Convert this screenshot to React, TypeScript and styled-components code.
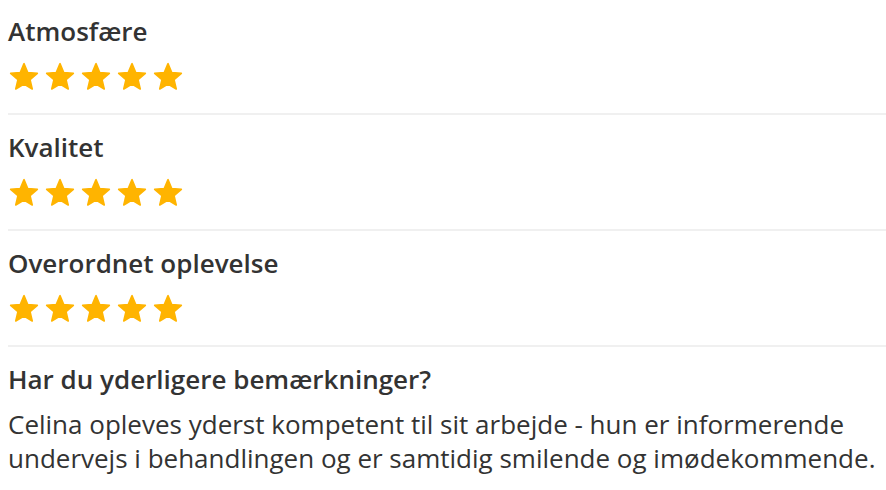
import React from 'react';
import styled, { createGlobalStyle } from 'styled-components';

const GlobalStyle = createGlobalStyle`
    body {
        margin: 0;
        background: #fff;
        font-family: 'Open Sans', 'Noto Sans', sans-serif;
        color: #333;
    }
`;

const Page = styled.div`
    padding: 0 0 0 8px;
`;

const Section = styled.div<{first?: boolean}>`
    padding: ${p => (p.first ? '13px' : '14px')} 0 20px 0;
    border-bottom: 2px solid #f0f0f0;
`;

const Title = styled.div`
    font-size: 26px;
    font-weight: 600;
    line-height: 36px;
`;

const Stars = styled.div`
    display: flex;
    gap: 4px;
    margin-top: 12px;
    height: 32px;
`;

const Remarks = styled.div`
    padding: 14px 0 0 0;
`;

const Question = styled.div`
    font-size: 26px;
    font-weight: 600;
    line-height: 36px;
`;

const Answer = styled.p`
    margin: 10px 0 0 0;
    font-size: 26px;
    line-height: 34px;
    color: #333;
`;

const Star = () => (
    <svg width="32" height="32" viewBox="0 0 24 24">
        <path
            d="M12 17.27L18.18 21l-1.64-7.03L22 9.24l-7.19-.61L12 2 9.19 8.63 2 9.24l5.46 4.73L5.82 21z"
            fill="#ffb400"
            stroke="#ffb400"
            strokeWidth="1.2"
            strokeLinejoin="round"
        />
    </svg>
);

const RATINGS = [
    {title: 'Atmosfære', stars: 5},
    {title: 'Kvalitet', stars: 5},
    {title: 'Overordnet oplevelse', stars: 5}
];

const App = (): JSX.Element => {
    return (
        <Page>
            <GlobalStyle />
            {RATINGS.map((r, i) => (
                <Section key={i} first={i === 0}>
                    <Title>{r.title}</Title>
                    <Stars>
                        {Array.from({length: r.stars}).map((_, j) => (
                            <Star key={j} />
                        ))}
                    </Stars>
                </Section>
            ))}
            <Remarks>
                <Question>Har du yderligere bemærkninger?</Question>
                <Answer>
                    Celina opleves yderst kompetent til sit arbejde - hun er informerende undervejs i behandlingen og er samtidig smilende og imødekommende.
                </Answer>
            </Remarks>
        </Page>
    );
};

export default App;
